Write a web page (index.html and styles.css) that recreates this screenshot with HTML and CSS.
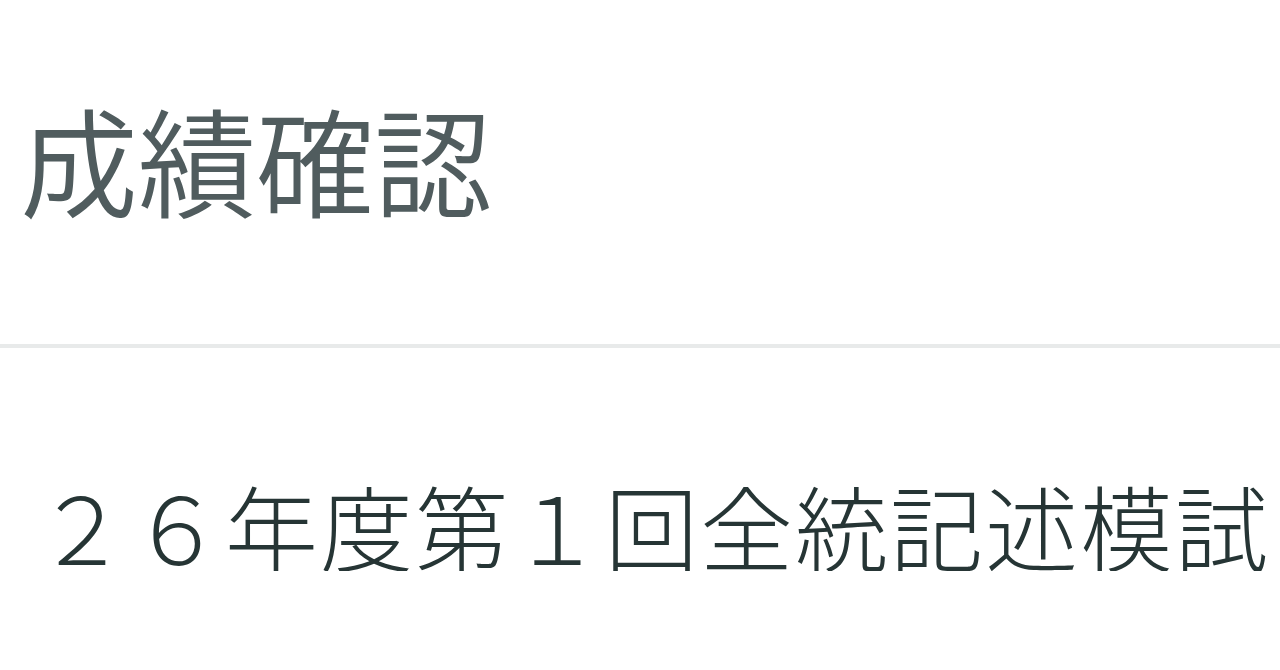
FILE: index.html
```html
<!DOCTYPE html>
<html lang="ja">
<head>
<meta charset="utf-8">
<title>成績確認</title>
<link rel="stylesheet" href="styles.css">
</head>
<body>
<header class="page-header">
  <h1 class="page-title">成績確認</h1>
</header>
<main class="content">
  <p class="exam-name">２６年度第１回全統記述模試</p>
</main>
</body>
</html>
```

FILE: styles.css
```css
html, body {
  margin: 0;
  padding: 0;
  background: #ffffff;
  font-family: "Noto Sans CJK JP", "Noto Sans", sans-serif;
}
.page-header {
  height: 344px;
  border-bottom: 4px solid #e8eaea;
  box-sizing: content-box;
  display: flex;
  align-items: flex-start;
  padding-left: 20px;
}
.page-title {
  margin: 0;
  padding-top: 99px;
  font-size: 118px;
  font-weight: 350;
  line-height: 1;
  color: #505c5e;
}
.content {
  padding-left: 35px;
}
.exam-name {
  margin: 0;
  padding-top: 130px;
  font-size: 93px;
  font-weight: 300;
  letter-spacing: 2px;
  line-height: 1;
  color: #263535;
  white-space: nowrap;
}
```
